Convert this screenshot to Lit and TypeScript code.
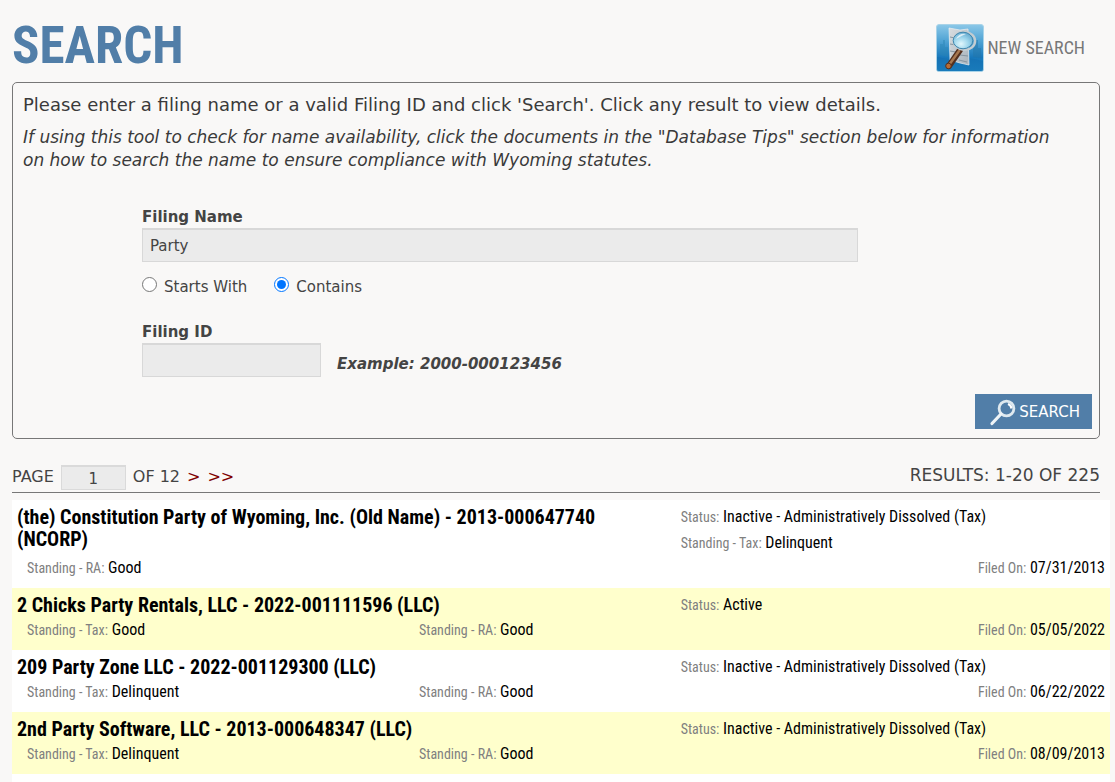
import { LitElement, html, css, svg } from "lit";
import { customElement, property, state } from "lit/decorators.js";

interface Field {
  label: string;
  value: string;
}

interface Filing {
  name: string;
  status: Field[];
  standing: Field[];
  filedOn: string;
}

const good = "Good";
const delinquent = "Delinquent";
const dissolved = "Inactive - Administratively Dissolved (Tax)";

const filings: Filing[] = [
  {
    name: "(the) Constitution Party of Wyoming, Inc. (Old Name) - 2013-000647740 (NCORP)",
    status: [
      { label: "Status:", value: dissolved },
      { label: "Standing - Tax:", value: delinquent },
    ],
    standing: [{ label: "Standing - RA:", value: good }],
    filedOn: "07/31/2013",
  },
  {
    name: "2 Chicks Party Rentals, LLC - 2022-001111596 (LLC)",
    status: [{ label: "Status:", value: "Active" }],
    standing: [
      { label: "Standing - Tax:", value: good },
      { label: "Standing - RA:", value: good },
    ],
    filedOn: "05/05/2022",
  },
  {
    name: "209 Party Zone LLC - 2022-001129300 (LLC)",
    status: [{ label: "Status:", value: dissolved }],
    standing: [
      { label: "Standing - Tax:", value: delinquent },
      { label: "Standing - RA:", value: good },
    ],
    filedOn: "06/22/2022",
  },
  {
    name: "2nd Party Software, LLC - 2013-000648347 (LLC)",
    status: [{ label: "Status:", value: dissolved }],
    standing: [
      { label: "Standing - Tax:", value: delinquent },
      { label: "Standing - RA:", value: good },
    ],
    filedOn: "08/09/2013",
  },
];

const newSearchIcon = svg`
  <svg class="new-icon" viewBox="0 0 48 48" aria-hidden="true">
    <defs>
      <linearGradient id="tile" x1="0" y1="0" x2="0" y2="1">
        <stop offset="0" stop-color="#8cc8e8" />
        <stop offset="0.35" stop-color="#4fa3d4" />
        <stop offset="0.7" stop-color="#1878bb" />
        <stop offset="1" stop-color="#1f87c6" />
      </linearGradient>
      <radialGradient id="lens" cx="0.4" cy="0.7" r="0.75">
        <stop offset="0" stop-color="#e2f7fc" />
        <stop offset="0.5" stop-color="#9ed6ec" />
        <stop offset="1" stop-color="#5fa5cc" />
      </radialGradient>
      <linearGradient id="paper" x1="0" y1="0" x2="1" y2="1">
        <stop offset="0" stop-color="#d9dde0" />
        <stop offset="1" stop-color="#a9b3bc" />
      </linearGradient>
    </defs>
    <rect x="0.5" y="0.5" width="47" height="47" rx="2.5" fill="url(#tile)" stroke="#a9d3e8" />
    <path d="M4 31V20h3v-4h2v7h3v10z" fill="#2b86b4" opacity="0.45" />
    <path d="M37 33V21h2v-5h3v8h3v10z" fill="#2476a8" opacity="0.5" />
    <path d="M1 33q12 3 20 1t26 3v10H1z" fill="#1268aa" opacity="0.4" />
    <path d="M13 4l11 2 8-1 1 36-9-2-10-3z" fill="url(#paper)" stroke="#edf1f3" stroke-width="0.7" />
    <path d="M14 13l5 1M14 20l6 1M14 27l6 1M23 36l8 2M24 31l8 1" stroke="#8795a0" fill="none" />
    <path d="M24 26l-11 16" stroke="#54301f" stroke-width="6" stroke-linecap="round" />
    <path d="M23 27l-10 14" stroke="#a87850" stroke-width="2.5" stroke-linecap="round" />
    <circle cx="12.5" cy="42" r="2.8" fill="#b66c35" stroke="#54301f" />
    <ellipse cx="28.5" cy="17" rx="10.6" ry="9" fill="none" stroke="#c3ccd1" stroke-width="2.4" />
    <ellipse cx="27" cy="16.5" rx="9.8" ry="8.3" fill="url(#lens)" stroke="#3e86ae" />
    <path d="M20 15q3-6 10-5-5 2-10 5z" fill="#fff" opacity="0.7" />
  </svg>`;

const magnifierIcon = svg`
  <svg class="search-icon" viewBox="0 0 28 28" aria-hidden="true">
    <circle cx="17.5" cy="10.5" r="7.400" fill="none" stroke="#dfe9ef" stroke-width="2.8" />
    <path d="M19 6q3 1 3.500 4.500" fill="none" stroke="#fff" stroke-width="2.2" />
    <path d="M12 16l-9 9.500" stroke="#eef4f7" stroke-width="3.200" stroke-linecap="round" />
  </svg>`;

@customElement("filing-row")
class FilingRow extends LitElement {
  @property({ attribute: false }) filing!: Filing;

  static styles = css`
    :host {
      display: block;
      padding: 6px 5px 10px;
      font-family: "Roboto Condensed", "Liberation Sans", sans-serif;
      color: #000;
    }
    .top {
      display: grid;
      grid-template-columns: 61fr 39fr;
    }
    .title {
      font-size: 20px;
      line-height: 22px;
      font-weight: bold;
      color: #000;
      text-decoration: none;
      padding-right: 60px;
    }
    .bottom {
      display: grid;
      grid-template-columns: 36fr 24fr 39fr;
      padding-left: 10px;
    }
    .field {
      font-size: 16px;
      line-height: 20px;
    }
    .top .field {
      line-height: 22px;
      padding-bottom: 4px;
    }
    .label {
      font-size: 14px;
      line-height: 14px;
      color: #808080;
    }
    .filed {
      text-align: right;
      grid-column: 3;
    }
  `;

  private field(f: Field, extra = "") {
    return html`<div class="field ${extra}"><span class="label">${f.label}</span> ${f.value}</div>`;
  }

  render() {
    const f = this.filing;
    return html`
      <div class="top">
        <a class="title" href="#">${f.name}</a>
        <div>${f.status.map((s) => this.field(s))}</div>
      </div>
      <div class="bottom">
        ${f.standing.map((s) => this.field(s))}
        ${this.field({ label: "Filed On:", value: f.filedOn }, "filed")}
      </div>
    `;
  }
}

@customElement("app-root")
class AppRoot extends LitElement {
  @state() private mode = "contains";

  static styles = css`
    :host {
      display: block;
      box-sizing: border-box;
      min-height: 100vh;
      background: #f9f8f7;
      padding: 14px 15px 0 12px;
      font-family: Verdana, "DejaVu Sans", sans-serif;
      font-size: 15px;
      color: #444;
    }
    * {
      box-sizing: border-box;
    }
    .header {
      display: flex;
      justify-content: space-between;
      align-items: center;
      height: 68px;
    }
    .heading {
      margin: 0;
      padding-bottom: 4px;
      font: bold 51px/64px "Roboto Condensed", "Liberation Sans", sans-serif;
      color: #517ea8;
    }
    .new-search {
      display: flex;
      align-items: center;
      gap: 3px;
      padding-right: 15px;
      font: 18px/24px "Roboto Condensed", "Liberation Sans", sans-serif;
      color: #777;
      text-decoration: none;
    }
    .new-icon {
      width: 48px;
      height: 48px;
    }
    .panel {
      border: 1px solid #777;
      border-radius: 5px;
      padding: 10px 7px 9px 10px;
    }
    .intro {
      margin: 0 0 10px;
      font-size: 18px;
      line-height: 23px;
      color: #3a3a3a;
    }
    .note {
      font-size: 17px;
      font-style: italic;
      padding-right: 24px;
    }
    .form {
      margin: 34px 0 0 119px;
    }
    .caption {
      display: block;
      font-weight: bold;
      line-height: 22px;
    }
    .text {
      display: block;
      height: 34px;
      border: 1px solid #d8d8d8;
      border-top-width: 2px;
      background: #ebebeb;
      padding: 0 7px;
      font: inherit;
      color: #444;
      border-radius: 0;
    }
    .name {
      width: 716px;
      max-width: 100%;
    }
    .modes {
      display: flex;
      gap: 27px;
      margin: 13px 0 22px;
      line-height: 24px;
    }
    .mode {
      display: flex;
      gap: 7px;
    }
    .radio {
      width: 15px;
      height: 15px;
      margin: 2px 0 0;
    }
    .id-line {
      display: flex;
      align-items: center;
      gap: 16px;
    }
    .id {
      width: 179px;
    }
    .example {
      font-weight: bold;
      font-style: italic;
      padding-top: 8px;
    }
    .actions {
      display: flex;
      justify-content: flex-end;
      margin-top: 17px;
    }
    .submit {
      display: flex;
      align-items: center;
      gap: 2px;
      height: 35px;
      border: 0;
      background: #517ea8;
      color: #fff;
      font: inherit;
      padding: 0 12px 0 14px;
    }
    .search-icon {
      width: 28px;
      height: 28px;
    }
    .pager {
      display: flex;
      justify-content: space-between;
      border-bottom: 1px solid #777;
      margin-top: 26px;
      padding-bottom: 2px;
      font-size: 16px;
      line-height: 24px;
    }
    .pages {
      display: flex;
      gap: 7px;
    }
    .total {
      font-size: 17px;
      line-height: 20px;
    }
    .page {
      width: 65px;
      height: 25px;
      border: 2px solid #dadada;
      border-width: 2px 1px 1px;
      background: #ebebeb;
      text-align: center;
      font: inherit;
      font-size: 15px;
      color: #444;
      padding: 2px 0 0;
    }
    .link {
      color: #800000;
      text-decoration: none;
    }
    .list {
      margin: 7px -10px 0 0;
      padding-bottom: 8px;
      background: #fff;
    }
    .alt {
      background: #ffffcc;
    }
  `;

  render() {
    return html`
      <header class="header">
        <h1 class="heading">SEARCH</h1>
        <a class="new-search" href="#">${newSearchIcon}<span>NEW SEARCH</span></a>
      </header>
      <form class="panel" @submit=${(e: Event) => e.preventDefault()}>
        <p class="intro">
          Please enter a filing name or a valid Filing ID and click 'Search'. Click any result to view details.
        </p>
        <p class="intro note">
          If using this tool to check for name availability, click the documents in the "Database Tips" section below
          for information on how to search the name to ensure compliance with Wyoming statutes.
        </p>
        <div class="form">
          <label class="caption" for="name">Filing Name</label>
          <input class="text name" id="name" type="text" value="Party" />
          <div class="modes">
            ${[
              ["starts", "Starts With"],
              ["contains", "Contains"],
            ].map(
              ([id, text]) => html`<label class="mode">
                <input
                  class="radio"
                  type="radio"
                  name="mode"
                  .checked=${this.mode === id}
                  @change=${() => (this.mode = id)}
                /><span>${text}</span>
              </label>`
            )}
          </div>
          <label class="caption" for="id">Filing ID</label>
          <div class="id-line">
            <input class="text id" id="id" type="text" />
            <span class="example">Example: 2000-000123456</span>
          </div>
        </div>
        <div class="actions">
          <button class="submit" type="submit">${magnifierIcon}<span>SEARCH</span></button>
        </div>
      </form>
      <nav class="pager">
        <div class="pages">
          <label for="page">PAGE</label>
          <input class="page" id="page" type="text" value="1" />
          <span>OF 12</span>
          <a class="link" href="#" aria-label="Next page">&gt;</a>
          <a class="link" href="#" aria-label="Last page">&gt;&gt;</a>
        </div>
        <span class="total">RESULTS: 1-20 OF 225</span>
      </nav>
      <main class="list">
        ${filings.map((f, i) => html`<filing-row class=${i % 2 ? "alt" : ""} .filing=${f}></filing-row>`)}
      </main>
    `;
  }
}
